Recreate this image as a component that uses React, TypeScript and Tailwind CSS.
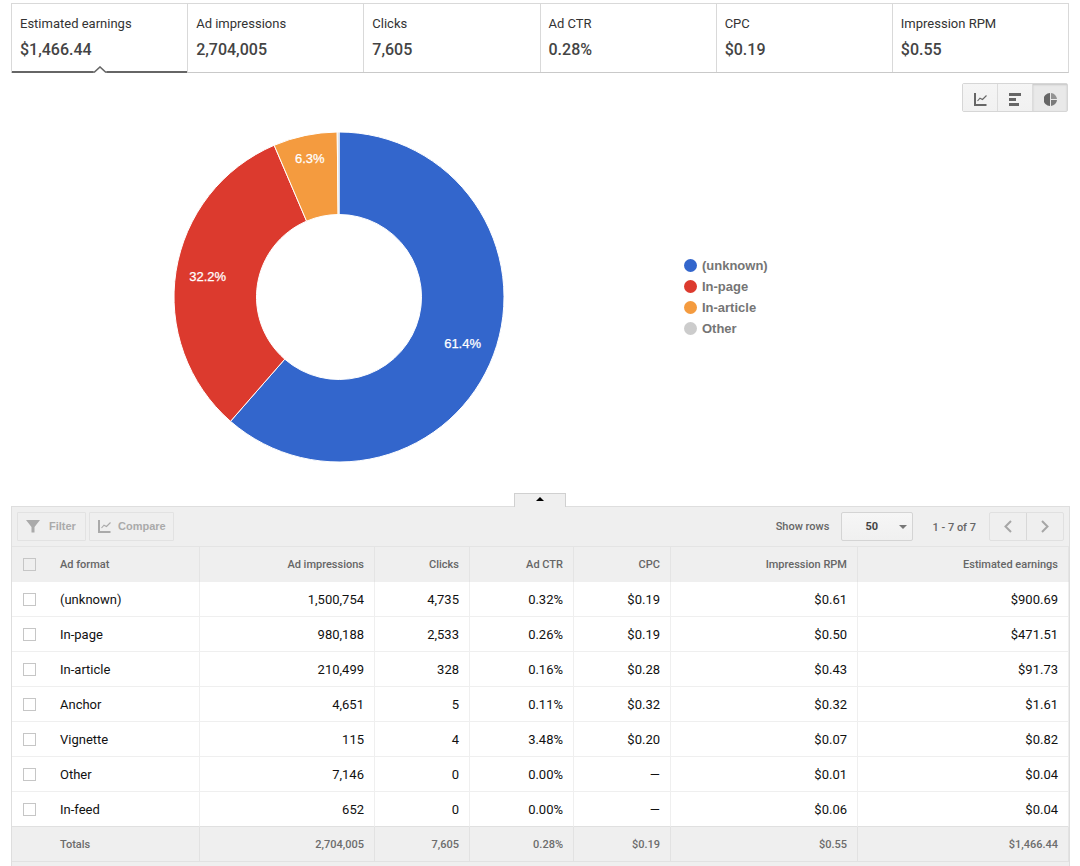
import { useState } from "react";

type Metric = { label: string; value: string };

const metrics: Metric[] = [
  { label: "Estimated earnings", value: "$1,466.44" },
  { label: "Ad impressions", value: "2,704,005" },
  { label: "Clicks", value: "7,605" },
  { label: "Ad CTR", value: "0.28%" },
  { label: "CPC", value: "$0.19" },
  { label: "Impression RPM", value: "$0.55" },
];

const columns = ["Ad impressions", "Clicks", "Ad CTR", "CPC", "Impression RPM", "Estimated earnings"];

const rows: { name: string; cells: string[] }[] = [
  { name: "(unknown)", cells: ["1,500,754", "4,735", "0.32%", "$0.19", "$0.61", "$900.69"] },
  { name: "In-page", cells: ["980,188", "2,533", "0.26%", "$0.19", "$0.50", "$471.51"] },
  { name: "In-article", cells: ["210,499", "328", "0.16%", "$0.28", "$0.43", "$91.73"] },
  { name: "Anchor", cells: ["4,651", "5", "0.11%", "$0.32", "$0.32", "$1.61"] },
  { name: "Vignette", cells: ["115", "4", "3.48%", "$0.20", "$0.07", "$0.82"] },
  { name: "Other", cells: ["7,146", "0", "0.00%", "—", "$0.01", "$0.04"] },
  { name: "In-feed", cells: ["652", "0", "0.00%", "—", "$0.06", "$0.04"] },
];

const totals = ["2,704,005", "7,605", "0.28%", "$0.19", "$0.55", "$1,466.44"];

const slices = [
  { label: "(unknown)", value: 900.69, color: "#3366cc", text: "61.4%", reach: 132, dot: "bg-[#3366cc]" },
  { label: "In-page", value: 471.51, color: "#dc3a2e", text: "32.2%", reach: 133, dot: "bg-[#dc3a2e]" },
  { label: "In-article", value: 91.73, color: "#f49b3f", text: "6.3%", reach: 142, dot: "bg-[#f49b3f]" },
  { label: "Other", value: 2.51, color: "#cccccc", text: "", reach: 132, dot: "bg-[#cccccc]" },
];

const CENTER = 165;
const OUTER = 165;
const INNER = 82.5;

function point(radius: number, turn: number) {
  const angle = turn * 2 * Math.PI - Math.PI / 2;
  return [CENTER + radius * Math.cos(angle), CENTER + radius * Math.sin(angle)];
}

function Donut() {
  const sum = slices.reduce((total, slice) => total + slice.value, 0);
  let turn = 0;
  const parts = slices.map((slice) => {
    const start = turn;
    const end = start + slice.value / sum;
    turn = end;
    const large = end - start > 0.5 ? 1 : 0;
    const [ax, ay] = point(OUTER, start);
    const [bx, by] = point(OUTER, end);
    const [cx, cy] = point(INNER, end);
    const [dx, dy] = point(INNER, start);
    const [tx, ty] = point(slice.reach, (start + end) / 2);
    const d = `M${ax} ${ay}A${OUTER} ${OUTER} 0 ${large} 1 ${bx} ${by}L${cx} ${cy}A${INNER} ${INNER} 0 ${large} 0 ${dx} ${dy}Z`;
    return { ...slice, d, tx, ty };
  });
  return (
    <svg width="330" height="330" viewBox="0 0 330 330" role="img" aria-label="Estimated earnings by ad format">
      {parts.map((part) => (
        <path key={part.label} d={part.d} fill={part.color} stroke="#fff" strokeWidth="1" />
      ))}
      {parts.map((part) => (
        <text
          key={part.label}
          x={part.tx}
          y={part.ty + 5}
          textAnchor="middle"
          stroke="#fff"
          strokeWidth="0.25"
          className="fill-white font-['Liberation_Sans',sans-serif] text-[13px]"
        >
          {part.text}
        </text>
      ))}
    </svg>
  );
}

function LineIcon() {
  return (
    <svg width="13" height="13" viewBox="0 0 13 13" fill="none" stroke="currentColor" aria-hidden="true">
      <path d="M1 0V12H12.5" strokeWidth="2" />
      <path d="M3.5 8L6 5.2L8.5 6.5L12.5 2.5" strokeWidth="1.1" />
    </svg>
  );
}

function BarIcon() {
  return (
    <svg width="13" height="13" viewBox="0 0 13 13" fill="currentColor" aria-hidden="true">
      <path d="M0 0H12V3H0ZM0 5H7V8H0ZM0 10H10V13H0Z" />
    </svg>
  );
}

function PieIcon() {
  return (
    <svg width="13" height="13" viewBox="0 0 13 13" fill="currentColor" aria-hidden="true">
      <path d="M6 0A6.5 6.5 0 0 0 6 13Z" />
      <path d="M7 0A6.5 6.5 0 0 1 13 6H7Z" opacity="0.65" />
      <path d="M7 7H13A6.5 6.5 0 0 1 7 13Z" opacity="0.85" />
    </svg>
  );
}

const checkbox = "block size-[13px] appearance-none border border-[#c6c6c6] checked:bg-[#666]";
const toolButton =
  "flex h-[29px] items-center rounded-[1px] border border-[#e2e2e2] text-[11px] font-bold text-[#aaa] font-['Liberation_Sans',sans-serif]";

export default function App() {
  const [active, setActive] = useState(0);
  const [view, setView] = useState(2);
  const [open, setOpen] = useState(true);

  return (
    <main className="px-[11px] pt-[3px] font-[Roboto,sans-serif] text-[#444]">
      <div className="grid grid-cols-6 border-y border-r border-t-[#d9d9d9] border-r-[#d9d9d9] border-b-[#c9c9c9]">
        {metrics.map((metric, index) => (
          <button
            key={metric.label}
            type="button"
            onClick={() => setActive(index)}
            className="relative border-l border-[#d9d9d9] px-2 py-[10px] text-left"
          >
            <span className="block text-[13px] leading-5 text-[#333]">{metric.label}</span>
            <span className="mt-1 block text-base leading-6 font-medium">{metric.value}</span>
            {active === index && (
              <span className="absolute inset-x-0 -bottom-px flex h-[7px] items-end">
                <span className="h-[2px] flex-1 bg-[#666]" />
                <svg width="14" height="7" viewBox="0 0 14 7" aria-hidden="true">
                  <path d="M1 7L7 1L13 7Z" fill="#fff" />
                  <path d="M0 6H1.5L7 1L12.5 6H14" fill="none" stroke="#666" strokeWidth="1.6" />
                </svg>
                <span className="h-[2px] flex-1 bg-[#666]" />
              </span>
            )}
          </button>
        ))}
      </div>

      {open && (
        <section>
          <div className="mt-[10px] flex justify-end pr-px">
            <div className="flex rounded-[2px] border border-[#d6d6d6] text-[#666]">
              {[LineIcon, BarIcon, PieIcon].map((Icon, index) => (
                <button
                  key={index}
                  type="button"
                  aria-label={["Line chart", "Bar chart", "Pie chart"][index]}
                  aria-pressed={view === index}
                  onClick={() => setView(index)}
                  className={
                    "flex h-[27px] w-[35px] items-center justify-center pt-1 first:w-[34px] not-first:border-l not-first:border-[#dcdcdc] " +
                    (view === index
                      ? "bg-[#e9e9e9] shadow-[inset_0_1px_2px_rgba(0,0,0,0.15)]"
                      : "bg-linear-to-b from-[#f5f5f5] to-[#f1f1f1]")
                  }
                >
                  <Icon />
                </button>
              ))}
            </div>
          </div>
          <div className="mt-5 mb-[31px] grid grid-cols-[62%_38%] items-center">
            <div className="flex justify-center">
              <Donut />
            </div>
            <ul className="pl-[17px] font-['Liberation_Sans',sans-serif] text-[13px] leading-[21px] font-bold text-[#757575]">
              {slices.map((slice) => (
                <li key={slice.label} className="flex items-center gap-[5px]">
                  <span className={"size-[13px] rounded-full " + slice.dot} />
                  {slice.label}
                </li>
              ))}
            </ul>
          </div>
        </section>
      )}

      <button
        type="button"
        aria-label="Toggle chart"
        onClick={() => setOpen(!open)}
        className="relative z-10 mx-auto -mb-px flex h-[14px] w-[52px] justify-center border border-b-0 border-[#d0d0d0] bg-[#efefef] pt-[3px]"
      >
        <svg width="8" height="4" viewBox="0 0 8 4" aria-hidden="true">
          <path d="M0 4L4 0L8 4Z" fill="#000" />
        </svg>
      </button>

      <section className="-mr-px border-x border-t border-[#dedede] bg-[#efefef]">
        <div className="flex items-center justify-between p-[5px]">
          <div className="flex gap-[3px]">
            <button type="button" className={toolButton + " w-[69px] gap-[9px] pl-2"}>
              <svg width="14" height="13" viewBox="0 0 14 13" fill="currentColor" aria-hidden="true">
                <path d="M0 0H14L8.5 7V12.5H5.5V7Z" />
              </svg>
              Filter
            </button>
            <button type="button" className={toolButton + " w-[85px] gap-[7px] pl-2"}>
              <LineIcon />
              Compare
            </button>
          </div>
          <div className="flex items-center text-[11px] font-medium text-[#666]">
            <label htmlFor="page-size" className="pt-px">
              Show rows
            </label>
            <div className="relative ml-3">
              <select
                id="page-size"
                defaultValue="50"
                className="block h-[29px] w-[72px] appearance-none rounded-[2px] border border-[#d4d4d4] bg-linear-to-b from-[#f6f6f6] to-[#f0f0f0] pt-px pl-[23px] text-[11px] font-bold text-[#444]"
              >
                <option>10</option>
                <option>50</option>
                <option>100</option>
              </select>
              <svg className="pointer-events-none absolute top-[13px] right-[6px]" width="8" height="4" viewBox="0 0 8 4" aria-hidden="true">
                <path d="M0 0H8L4 4Z" fill="#777" />
              </svg>
            </div>
            <span className="ml-[19px] pt-[3px]">1 - 7 of 7</span>
            <div className="ml-[13px] flex h-[29px] rounded-[2px] border border-[#e0e0e0] text-[#a6a6a6]">
              <button type="button" aria-label="Previous page" className="flex w-9 items-center justify-center">
                <svg width="8" height="13" viewBox="0 0 8 13" fill="none" stroke="currentColor" strokeWidth="2" aria-hidden="true">
                  <path d="M7 1L1.5 6.5L7 12" />
                </svg>
              </button>
              <button type="button" aria-label="Next page" className="flex w-[37px] items-center justify-center border-l border-[#d8d8d8]">
                <svg width="8" height="13" viewBox="0 0 8 13" fill="none" stroke="currentColor" strokeWidth="2" aria-hidden="true">
                  <path d="M1 1L6.5 6.5L1 12" />
                </svg>
              </button>
            </div>
          </div>
        </div>

        <table className="w-full table-fixed border-separate border-spacing-0 text-right">
          <colgroup>
            <col className="w-12" />
            <col className="w-[140px]" />
            <col className="w-[175px]" />
            <col className="w-[95px]" />
            <col className="w-[104px]" />
            <col className="w-[97px]" />
            <col className="w-[187px]" />
            <col />
          </colgroup>
          <thead className="text-[11px] text-[#666]">
            <tr>
              <th className="h-9 border-t border-[#e4e4e4] pl-[11px]">
                <input type="checkbox" aria-label="Select all rows" className={checkbox} />
              </th>
              <th scope="col" className="border-t border-r border-[#e4e4e4] pt-[2px] text-left font-medium">Ad format</th>
              {columns.map((column) => (
                <th key={column} scope="col" className="border-t border-r border-[#e4e4e4] pt-[2px] pr-[10px] font-medium">
                  {column}
                </th>
              ))}
            </tr>
          </thead>
          <tbody className="bg-white text-[13px] text-[#111]">
            {rows.map((row) => (
              <tr key={row.name} className="last:[&>td]:border-b-[#e0e0e0]">
                <td className="h-[35px] border-b border-[#efefef] pl-[11px]">
                  <input type="checkbox" aria-label={"Select " + row.name} className={checkbox} />
                </td>
                <td className="border-r border-b border-[#efefef] pt-[2px] text-left">{row.name}</td>
                {row.cells.map((cell, index) => (
                  <td key={index} className="border-r border-b border-[#efefef] pt-[2px] pr-[10px]">
                    {cell}
                  </td>
                ))}
              </tr>
            ))}
          </tbody>
          <tfoot className="text-[11px] font-medium text-[#6c6c6c]">
            <tr>
              <td className="h-[35px] border-b border-[#e2e2e2]" />
              <td className="border-r border-b border-[#e2e2e2] pt-[2px] text-left">Totals</td>
              {totals.map((total, index) => (
                <td key={index} className="border-r border-b border-[#e2e2e2] pt-[2px] pr-[10px]">
                  {total}
                </td>
              ))}
            </tr>
          </tfoot>
        </table>
        <div className="h-1" />
      </section>
    </main>
  );
}
